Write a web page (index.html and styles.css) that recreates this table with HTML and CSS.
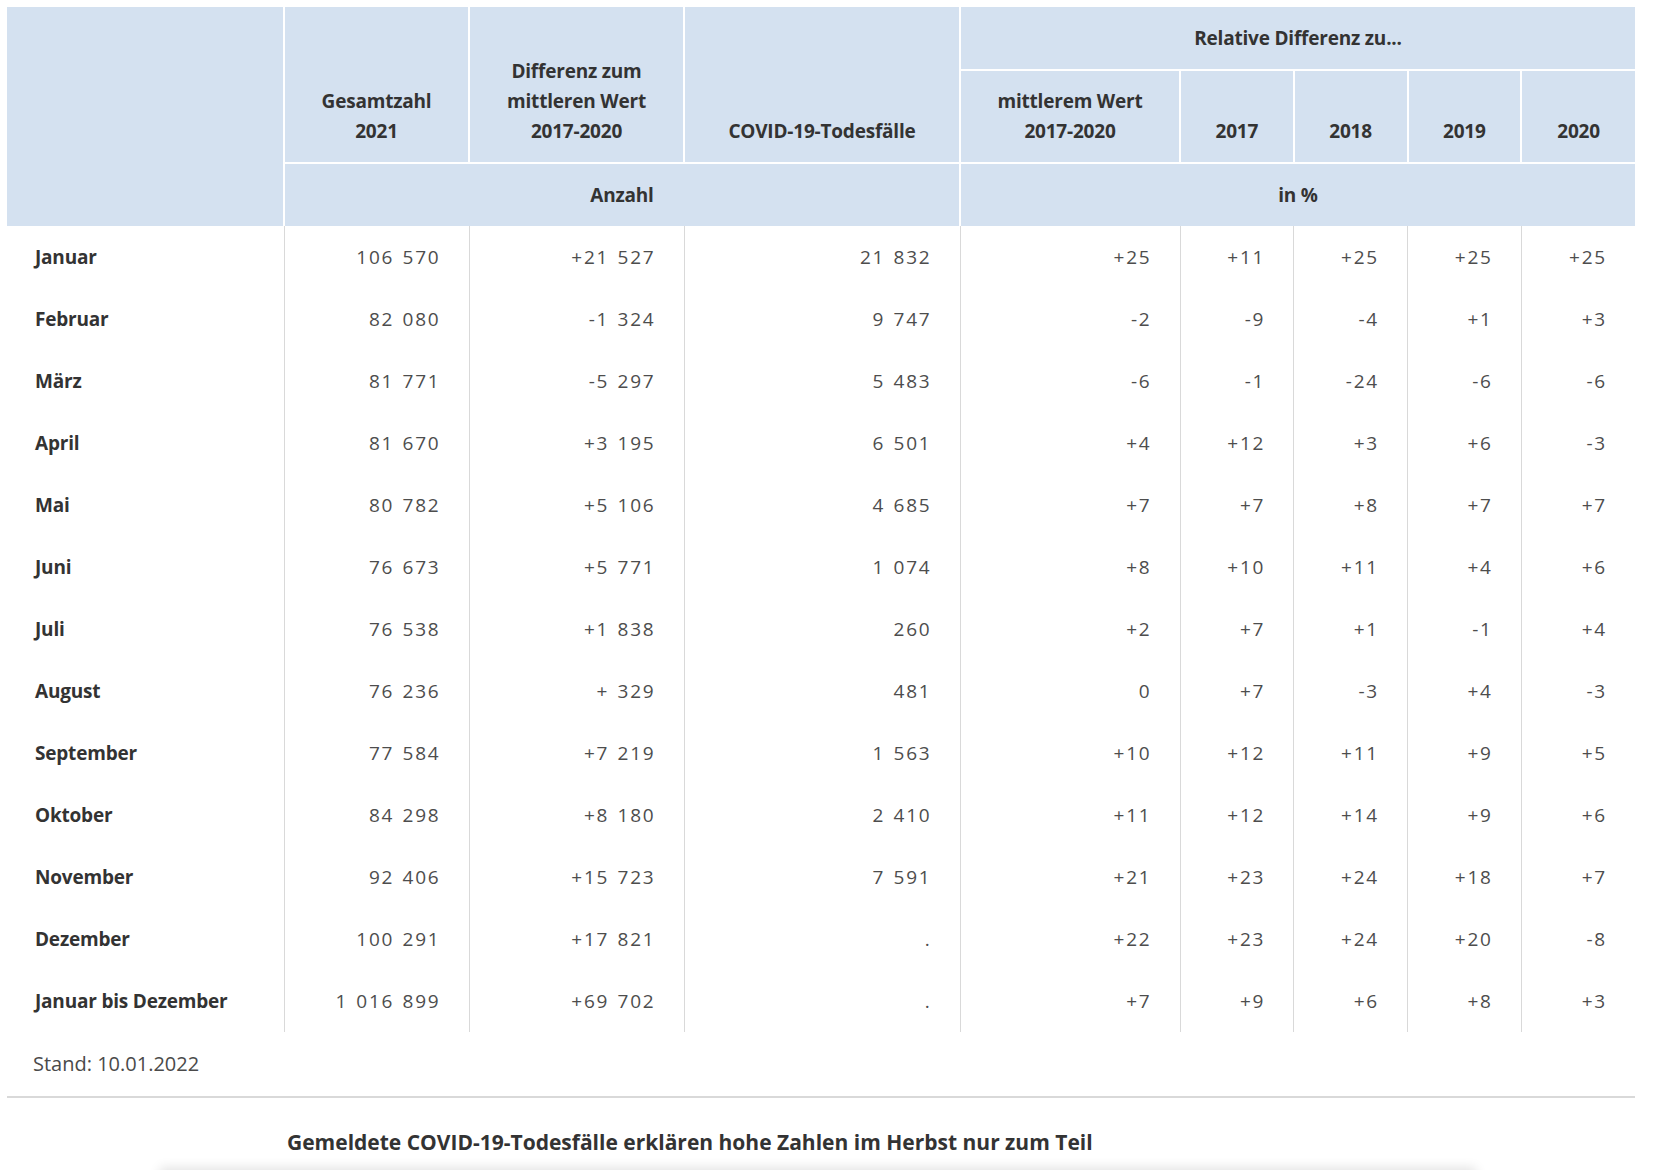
FILE: index.html
```html
<!DOCTYPE html>
<html lang="de">
<head>
<meta charset="utf-8">
<title>Sterbefälle 2021</title>
<link rel="stylesheet" href="styles.css">
</head>
<body>
<div class="page">
  <table class="stat">
    <colgroup>
      <col class="c0"><col class="c1"><col class="c2"><col class="c3"><col class="c4">
      <col class="cy"><col class="cy"><col class="cy"><col class="cy">
    </colgroup>
    <thead>
      <tr class="h1">
        <th rowspan="3" class="blank"></th>
        <th rowspan="2" class="bot">Gesamtzahl<br>2021</th>
        <th rowspan="2" class="bot">Differenz zum<br>mittleren Wert<br>2017-2020</th>
        <th rowspan="2" class="bot">COVID-19-Todesfälle</th>
        <th colspan="5">Relative Differenz zu...</th>
      </tr>
      <tr class="h2">
        <th class="bot">mittlerem Wert<br>2017-2020</th>
        <th class="bot">2017</th>
        <th class="bot">2018</th>
        <th class="bot">2019</th>
        <th class="bot">2020</th>
      </tr>
      <tr class="h3">
        <th colspan="3">Anzahl</th>
        <th colspan="5">in %</th>
      </tr>
    </thead>
    <tbody>
      <tr><td class="lbl">Januar</td><td class="num">106 570</td><td class="num">+21 527</td><td class="num">21 832</td><td class="num">+25</td><td class="num">+11</td><td class="num">+25</td><td class="num">+25</td><td class="num">+25</td></tr>
      <tr><td class="lbl">Februar</td><td class="num">82 080</td><td class="num">-1 324</td><td class="num">9 747</td><td class="num">-2</td><td class="num">-9</td><td class="num">-4</td><td class="num">+1</td><td class="num">+3</td></tr>
      <tr><td class="lbl">März</td><td class="num">81 771</td><td class="num">-5 297</td><td class="num">5 483</td><td class="num">-6</td><td class="num">-1</td><td class="num">-24</td><td class="num">-6</td><td class="num">-6</td></tr>
      <tr><td class="lbl">April</td><td class="num">81 670</td><td class="num">+3 195</td><td class="num">6 501</td><td class="num">+4</td><td class="num">+12</td><td class="num">+3</td><td class="num">+6</td><td class="num">-3</td></tr>
      <tr><td class="lbl">Mai</td><td class="num">80 782</td><td class="num">+5 106</td><td class="num">4 685</td><td class="num">+7</td><td class="num">+7</td><td class="num">+8</td><td class="num">+7</td><td class="num">+7</td></tr>
      <tr><td class="lbl">Juni</td><td class="num">76 673</td><td class="num">+5 771</td><td class="num">1 074</td><td class="num">+8</td><td class="num">+10</td><td class="num">+11</td><td class="num">+4</td><td class="num">+6</td></tr>
      <tr><td class="lbl">Juli</td><td class="num">76 538</td><td class="num">+1 838</td><td class="num">260</td><td class="num">+2</td><td class="num">+7</td><td class="num">+1</td><td class="num">-1</td><td class="num">+4</td></tr>
      <tr><td class="lbl">August</td><td class="num">76 236</td><td class="num">+ 329</td><td class="num">481</td><td class="num">0</td><td class="num">+7</td><td class="num">-3</td><td class="num">+4</td><td class="num">-3</td></tr>
      <tr><td class="lbl">September</td><td class="num">77 584</td><td class="num">+7 219</td><td class="num">1 563</td><td class="num">+10</td><td class="num">+12</td><td class="num">+11</td><td class="num">+9</td><td class="num">+5</td></tr>
      <tr><td class="lbl">Oktober</td><td class="num">84 298</td><td class="num">+8 180</td><td class="num">2 410</td><td class="num">+11</td><td class="num">+12</td><td class="num">+14</td><td class="num">+9</td><td class="num">+6</td></tr>
      <tr><td class="lbl">November</td><td class="num">92 406</td><td class="num">+15 723</td><td class="num">7 591</td><td class="num">+21</td><td class="num">+23</td><td class="num">+24</td><td class="num">+18</td><td class="num">+7</td></tr>
      <tr><td class="lbl">Dezember</td><td class="num">100 291</td><td class="num">+17 821</td><td class="num">.</td><td class="num">+22</td><td class="num">+23</td><td class="num">+24</td><td class="num">+20</td><td class="num">-8</td></tr>
      <tr><td class="lbl">Januar bis Dezember</td><td class="num">1 016 899</td><td class="num">+69 702</td><td class="num">.</td><td class="num">+7</td><td class="num">+9</td><td class="num">+6</td><td class="num">+8</td><td class="num">+3</td></tr>
    </tbody>
  </table>
  <p class="stand">Stand: 10.01.2022</p>
  <hr class="rule">
  <h2 class="next">Gemeldete COVID-19-Todesfälle erklären hohe Zahlen im Herbst nur zum Teil</h2>
  <div class="card"></div>
</div>
</body>
</html>
```

FILE: styles.css
```css
html, body {
  margin: 0;
  padding: 0;
  background: #fff;
}
body {
  font-family: "Open Sans", "Noto Sans", "Liberation Sans", sans-serif;
  color: #333;
  overflow: hidden;
}
.page {
  padding: 7px 0 0 7px;
  width: 1628px;
}
.stat {
  width: 1628px;
  table-layout: fixed;
  border-collapse: collapse;
  font-size: 19px;
  line-height: 28px;
}
.c0 { width: 277px; }
.c1 { width: 185px; }
.c2 { width: 215px; }
.c3 { width: 276px; }
.c4 { width: 220px; }
.cy { width: 113.75px; }

.stat th {
  background: #d4e1f0;
  font-weight: 700;
  color: #333;
  text-align: center;
  vertical-align: middle;
  padding: 0 8px;
  line-height: 30px;
  letter-spacing: -0.2px;
  border-left: 2px solid #fff;
  border-top: 2px solid #fff;
}
.stat thead tr.h1 th { border-top: none; }
.stat th.blank { border-left: none; }
.stat th.bot {
  vertical-align: bottom;
  padding-bottom: 16px;
}
.stat tr.h1 { height: 63px; }
.stat tr.h2 { height: 93px; }
.stat tr.h3 { height: 63px; }

.stat tbody tr { height: 62px; }
.stat td {
  padding: 0;
  vertical-align: middle;
  border-left: 1px solid #d9d9d9;
}
.stat td.lbl {
  border-left: none;
  padding-left: 28px;
  font-weight: 700;
  letter-spacing: -0.2px;
  color: #333;
}
.stat td.num {
  text-align: right;
  padding-right: 28px;
  color: #4d4d4d;
  font-weight: 400;
  font-variant-numeric: tabular-nums;
  letter-spacing: 1.8px;
  word-spacing: 1.5px;
}

.stand {
  margin: 18px 0 0 26px;
  font-size: 20px;
  line-height: 28px;
  color: #4a4a4a;
}
.rule {
  margin: 18px 0 0 0;
  border: none;
  border-top: 2px solid #d9d9d9;
  height: 0;
}
.next {
  margin: 30px 0 0 280px;
  font-size: 21px;
  line-height: 28px;
  font-weight: 700;
  color: #333;
}
.card {
  margin: 14px 0 0 153px;
  width: 1316px;
  height: 20px;
  background: #fff;
  box-shadow: 0 -2px 12px rgba(0, 0, 0, 0.12);
}
```
